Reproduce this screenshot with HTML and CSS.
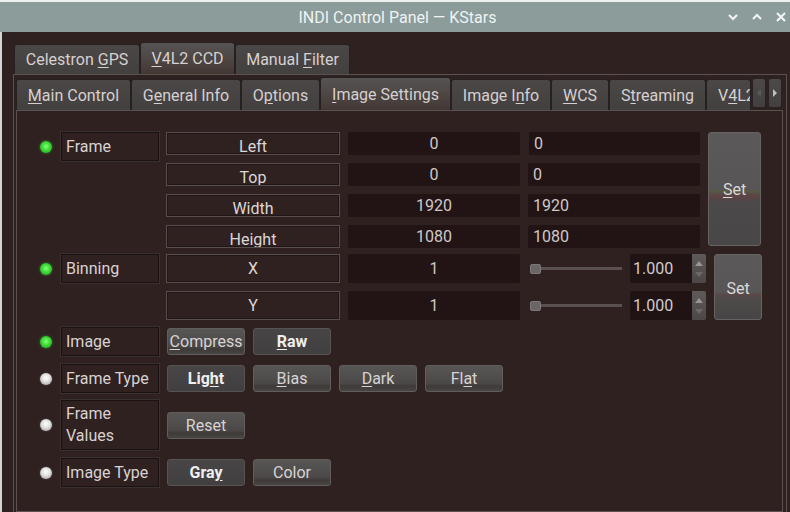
FILE: index.html
```html
<!DOCTYPE html>
<html>
<head>
<meta charset="utf-8">
<title>INDI Control Panel — KStars</title>
<link rel="stylesheet" href="styles.css">
</head>
<body>
<div class="window">
  <div class="titlebar">
    <div></div>
    <div class="title">INDI Control Panel — KStars</div>
    <div class="tb-buttons">
      <svg width="12" height="12" viewBox="0 0 12 12"><path d="M2 4 L6 8 L10 4" fill="none" stroke="#f4f7f7" stroke-width="2"/></svg>
      <svg width="12" height="12" viewBox="0 0 12 12"><path d="M2 8 L6 4 L10 8" fill="none" stroke="#f4f7f7" stroke-width="2"/></svg>
      <svg width="12" height="12" viewBox="0 0 12 12"><path d="M2 2 L10 10 M10 2 L2 10" fill="none" stroke="#f4f7f7" stroke-width="2"/></svg>
    </div>
  </div>
  <div class="main">
    <div class="toptabs">
      <div class="tab w-gps"><span>Celestron <u>G</u>PS</span></div>
      <div class="tab sel w-ccd"><span><u>V</u>4L2 CCD</span></div>
      <div class="tab w-filter"><span>Manual <u>F</u>ilter</span></div>
    </div>
    <div class="outerpane">
      <div class="subtabs">
        <div class="subtab-list">
          <div class="stab w-main"><span><u>M</u>ain Control</span></div>
          <div class="stab w-gen"><span>G<u>e</u>neral Info</span></div>
          <div class="stab w-opt"><span>O<u>p</u>tions</span></div>
          <div class="stab sel w-img"><span><u>I</u>mage Settings</span></div>
          <div class="stab w-info"><span>Image I<u>n</u>fo</span></div>
          <div class="stab w-wcs"><span><u>W</u>CS</span></div>
          <div class="stab w-str"><span>S<u>t</u>reaming</span></div>
          <div class="stab last"><span>V<u>4</u>L2</span></div>
        </div>
        <div class="scrollbtn dim"><svg width="6" height="8" viewBox="0 0 6 8"><path d="M5 0 L1 4 L5 8 Z" fill="#5e5858"/></svg></div>
        <div class="scrollbtn"><svg width="6" height="8" viewBox="0 0 6 8"><path d="M1 0 L5 4 L1 8 Z" fill="#c4bebe"/></svg></div>
      </div>
      <div class="innerpane">

        <div class="group">
          <div class="side"><span class="led green"></span><div class="label">Frame</div></div>
          <div class="framegrid">
            <div class="name low">Left</div>
            <div class="val">0</div>
            <div class="val left">0</div>
            <div class="setbtn tall"><span><u>S</u>et</span></div>
            <div class="name low">Top</div>
            <div class="val">0</div>
            <div class="val left">0</div>
            <div class="name low">Width</div>
            <div class="val">1920</div>
            <div class="val left">1920</div>
            <div class="name low">Height</div>
            <div class="val">1080</div>
            <div class="val left">1080</div>
          </div>
        </div>

        <div class="group g-bin">
          <div class="side"><span class="led green"></span><div class="label">Binning</div></div>
          <div class="bingrid">
            <div class="name">X</div>
            <div class="val">1</div>
            <div class="slider"><span class="handle"></span><span class="track"></span></div>
            <div class="spin"><span class="spintext">1.000</span><span class="arrows"><svg width="8" height="22" viewBox="0 0 8 22"><path d="M0 8 L4 3 L8 8 Z" fill="#9a9494"/><path d="M0 14 L4 19 L8 14 Z" fill="#6e6868"/></svg></span></div>
            <div class="setbtn short"><span>Set</span></div>
            <div class="name">Y</div>
            <div class="val">1</div>
            <div class="slider"><span class="handle"></span><span class="track"></span></div>
            <div class="spin"><span class="spintext">1.000</span><span class="arrows"><svg width="8" height="22" viewBox="0 0 8 22"><path d="M0 8 L4 3 L8 8 Z" fill="#9a9494"/><path d="M0 14 L4 19 L8 14 Z" fill="#6e6868"/></svg></span></div>
          </div>
        </div>

        <div class="group center g-img">
          <div class="side"><span class="led green"></span><div class="label">Image</div></div>
          <div class="btnrow">
            <div class="btn"><span><u>C</u>ompress</span></div>
            <div class="btn on"><span><u>R</u>aw</span></div>
          </div>
        </div>

        <div class="group center g-ft">
          <div class="side"><span class="led grey"></span><div class="label">Frame Type</div></div>
          <div class="btnrow">
            <div class="btn on"><span>Lig<u>h</u>t</span></div>
            <div class="btn"><span><u>B</u>ias</span></div>
            <div class="btn"><span><u>D</u>ark</span></div>
            <div class="btn"><span>Fl<u>a</u>t</span></div>
          </div>
        </div>

        <div class="group center g-fv">
          <div class="side"><span class="led grey"></span><div class="label two">Frame<br>Values</div></div>
          <div class="btnrow">
            <div class="btn">Reset</div>
          </div>
        </div>

        <div class="group center g-it">
          <div class="side"><span class="led grey"></span><div class="label">Image Type</div></div>
          <div class="btnrow">
            <div class="btn on"><span>Gra<u>y</u></span></div>
            <div class="btn">Color</div>
          </div>
        </div>

      </div>
    </div>
  </div>
</div>
</body>
</html>
```

FILE: styles.css
```css
* { box-sizing: border-box; }

html, body {
  margin: 0;
  width: 790px;
  height: 512px;
  overflow: hidden;
}

body {
  background: #302121;
  font-family: Roboto, "Noto Sans", sans-serif;
  font-size: 16px;
  color: #d9d2d2;
}

u { text-decoration: underline; text-underline-offset: 2px; }

.window {
  height: 512px;
  display: flex;
  flex-direction: column;
}

.titlebar {
  height: 32px;
  flex: none;
  background: #8b9c9b;
  border-top: 2px solid #eef1f0;
  display: grid;
  grid-template-columns: 1fr auto 1fr;
  align-items: center;
  color: #eef3f3;
  font-size: 16px;
}

.title { padding-top: 1px; padding-left: 5px; }

.tb-buttons {
  display: flex;
  justify-content: flex-end;
  gap: 12px;
  padding-right: 3px;
}

.main {
  flex: 1;
  border-left: 2px solid #d2d5d4;
  padding: 10px 0 0 11px;
  display: flex;
  flex-direction: column;
}

.toptabs {
  display: flex;
  align-items: flex-end;
  height: 32px;
  margin-left: 1px;
  flex: none;
}

.tab {
  flex: none;
  height: 30px;
  background: linear-gradient(#4b4747, #434040);
  border: 1px solid #262020;
  border-bottom: none;
  border-radius: 3px 3px 0 0;
  display: flex;
  align-items: center;
  justify-content: center;
  color: #d6d0d0;
  white-space: nowrap;
}

.tab.sel {
  height: 32px;
  background: linear-gradient(#575353, #4c4542 55%, #443734);
}

.w-gps { width: 126px; }
.w-ccd { width: 95px; }
.w-filter { width: 115px; }

.outerpane {
  flex: 1;
  border: 1px solid #5a5151;
  border-bottom: none;
  margin-right: 3px;
  padding: 2px 3px 0 2px;
  display: flex;
  flex-direction: column;
}

.subtabs {
  display: flex;
  align-items: flex-end;
  height: 33px;
  flex: none;
}

.subtab-list {
  flex: 1;
  display: flex;
  align-items: flex-end;
  overflow: hidden;
  height: 33px;
}

.stab {
  flex: none;
  height: 31px;
  background: linear-gradient(#4b4747, #434040);
  border: 1px solid #262020;
  border-bottom: none;
  border-radius: 3px 3px 0 0;
  display: flex;
  align-items: center;
  justify-content: center;
  color: #d6d0d0;
  white-space: nowrap;
}

.stab.sel {
  height: 33px;
  background: linear-gradient(#575353, #4c4542 55%, #443734);
}

.w-main { width: 115px; }
.w-gen { width: 110px; }
.w-opt { width: 79px; }
.w-img { width: 131px; }
.w-info { width: 100px; }
.w-wcs { width: 58px; }
.w-str { width: 97px; }

.stab.last {
  flex: 1;
  justify-content: flex-start;
  padding-left: 11px;
  overflow: hidden;
}

.scrollbtn {
  flex: none;
  width: 14px;
  height: 30px;
  margin: 0 1px 2px 1px;
  background: linear-gradient(#4d4949, #434040);
  border: 1px solid #2a2222;
  border-radius: 3px;
  display: flex;
  align-items: center;
  justify-content: center;
}

.innerpane {
  flex: 1;
  border: 1px solid #5a5151;
  padding: 21px 0 0 23px;
  display: flex;
  flex-direction: column;
}

.group {
  display: flex;
  align-items: flex-start;
}

.group.center { align-items: center; }

.g-bin { margin-top: 6px; }
.g-img { margin-top: 7px; }
.g-ft { margin-top: 8px; }
.g-fv { margin-top: 7px; }
.g-it { margin-top: 8px; }

.side {
  display: flex;
  align-items: center;
  flex: none;
  margin-right: 7px;
}

.led {
  width: 12px;
  height: 12px;
  border-radius: 50%;
  margin-right: 9px;
  flex: none;
}

.led.green {
  background: radial-gradient(circle at 50% 45%, #8dff7a 0%, #3fe03a 40%, #1f9a1c 100%);
  box-shadow: 0 0 3px rgba(70, 220, 60, 0.5);
}

.led.grey {
  background: radial-gradient(circle at 50% 40%, #ffffff 0%, #e2e2e2 40%, #9a9696 100%);
  box-shadow: 0 0 2px rgba(220, 220, 220, 0.3);
}

.label {
  width: 98px;
  height: 29px;
  border: 1px solid #1a1111;
  box-shadow: 0 0 0 1px #3b3030;
  padding-left: 4px;
  display: flex;
  align-items: center;
  color: #d9d2d2;
  white-space: nowrap;
}

.label.two {
  height: 50px;
  line-height: 22px;
  white-space: normal;
}

.framegrid {
  display: grid;
  grid-template-columns: 174px 172px 172px 53px;
  grid-template-rows: repeat(4, 23px);
  column-gap: 8px;
  row-gap: 8px;
}

.framegrid > :nth-child(3) { margin-left: 1px; }

.name {
  border: 1px solid #584c4c;
  box-shadow: inset 0 0 0 1px #1f1616;
  text-align: center;
  line-height: 27px;
  color: #dcd6d6;
  overflow: hidden;
}

.name.low {
  line-height: 23px;
  padding-top: 2px;
}

.val {
  background: #221414;
  border-radius: 2px;
  display: flex;
  align-items: center;
  justify-content: center;
  color: #cfc8c8;
}

.val.left {
  justify-content: flex-start;
  padding-left: 5px;
}

.setbtn {
  border: 1px solid #686363;
  border-radius: 3px;
  display: flex;
  align-items: center;
  justify-content: center;
  color: #dcd8d8;
}

.setbtn.tall {
  grid-column: 4;
  grid-row: 1 / span 4;
  height: 114px;
  background: linear-gradient(#5b5959 0%, #575555 50%, #555b44 52%, #5c4747 55%, #5a4444 58%, #4b4949 62%, #484646 100%);
}

.setbtn.short {
  grid-column: 5;
  grid-row: 1 / span 2;
  background: linear-gradient(#5b5959 0%, #575555 58%, #5c4747 62%, #4e4a4a 68%, #474545 100%);
}

.setbtn.short span { margin-top: 2px; }

.bingrid {
  display: grid;
  grid-template-columns: 174px 172px 94px 76px 48px;
  grid-template-rows: 29px 29px;
  column-gap: 8px;
  row-gap: 8px;
}

.slider {
  display: flex;
  align-items: center;
  padding-left: 2px;
}

.handle {
  width: 11px;
  height: 10px;
  border-radius: 2px;
  background: #6a6666;
  border: 1px solid #7e7878;
  flex: none;
}

.track {
  flex: 1;
  height: 3px;
  background: #5a5050;
}

.spin {
  display: flex;
  border-radius: 2px;
  overflow: hidden;
}

.spintext {
  flex: 1;
  background: #1f1313;
  display: flex;
  align-items: center;
  padding-left: 3px;
  color: #d2cccc;
}

.arrows {
  width: 14px;
  background: linear-gradient(#5e5a5a, #4c4848);
  display: flex;
  align-items: center;
  justify-content: center;
}

.btnrow {
  display: flex;
  gap: 8px;
  margin-left: 1px;
}

.btn {
  width: 78px;
  height: 27px;
  border: 1px solid #615d5c;
  border-radius: 3px;
  background: linear-gradient(#585655 0%, #4f4d4c 50%, #4a4746 70%, #3e3a38 80%, #474544 100%);
  display: flex;
  align-items: center;
  justify-content: center;
  color: #d8d3d3;
  white-space: nowrap;
}

.btn.on {
  background: linear-gradient(#474545, #413f3f);
  border-color: #575353;
  font-weight: bold;
  color: #f0eeee;
}
```
